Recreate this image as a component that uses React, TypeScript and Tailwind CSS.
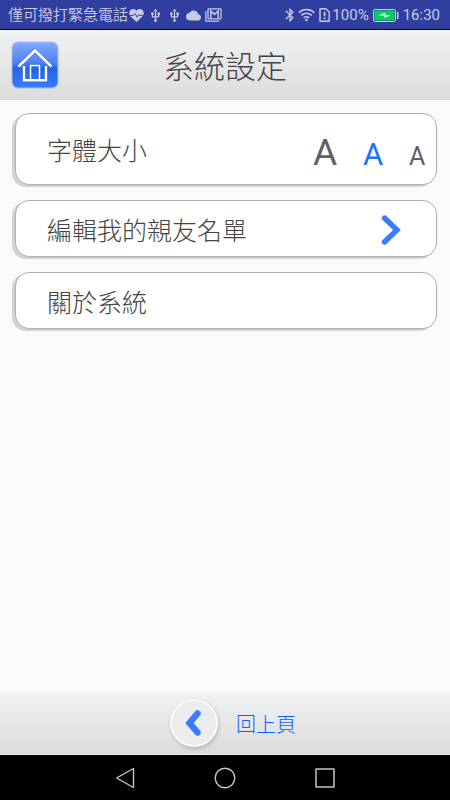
import { useState } from "react";
import { MdBluetooth, MdCloud, MdUsb } from "react-icons/md";

type FontSize = "large" | "medium" | "small";

const fontSizes: { id: FontSize; label: string; className: string }[] = [
  { id: "large", label: "大", className: "w-6 text-[37px]" },
  { id: "medium", label: "中", className: "w-5 text-[31px]" },
  { id: "small", label: "小", className: "w-4 text-[25px]" },
];

const cardClass =
  "flex w-full items-center rounded-[14px] border border-[#aeaeae] bg-white pt-[2px] pr-[11px] pl-[31px] text-left text-[25px] font-light text-[#444] shadow-[-3px_2px_0_0_#d2d2d2]";

const HeartIcon = () => (
  <svg width="15" height="13" viewBox="0 0 15 13" aria-hidden="true">
    <path
      d="M7.5 13 1.6 7.4C-.2 5.5 0 2.5 1.6 1.1 3.4-.5 6.1-.2 7.5 1.8 8.9-.2 11.6-.5 13.4 1.1c1.6 1.4 1.8 4.4 0 6.3z"
      fill="currentColor"
    />
    <path d="M1 6.5h3.5l1.5-2 2.2 3.7 1.6-2.7.9 1H14" fill="none" stroke="#303f9f" strokeWidth=".9" />
  </svg>
);

const MailIcon = () => (
  <svg width="17" height="14" viewBox="0 0 17 14" fill="none" stroke="currentColor" aria-hidden="true">
    <path d="M.8 3v10.2h13.4" strokeWidth="1.2" />
    <rect x="3" y=".8" width="13" height="10" rx=".8" strokeWidth="1.3" />
    <path d="M5.8 10V3l3.7 3.4L13.2 3v7" strokeWidth="1.5" />
  </svg>
);

const WifiIcon = () => (
  <svg width="17" height="14" viewBox="0 0 17 14" fill="none" stroke="currentColor" strokeWidth="1.5" aria-hidden="true">
    <path d="M.8 4.6c4.4-4.1 11-4.1 15.4 0M3.3 7.4c3-2.8 7.4-2.8 10.4 0M5.7 10c1.7-1.5 3.9-1.5 5.6 0" />
    <circle cx="8.5" cy="12" r="1.3" fill="currentColor" stroke="none" />
  </svg>
);

const SimIcon = () => (
  <svg width="11" height="14" viewBox="0 0 11 14" fill="none" stroke="currentColor" aria-hidden="true">
    <path d="M1 .8h5.8L10.2 4v9.2H1z" strokeWidth="1.4" strokeLinejoin="round" />
    <path d="M5.6 3.8v4.4M5.6 9.4v1.8" strokeWidth="1.7" />
  </svg>
);

const BatteryIcon = () => (
  <svg width="26" height="13" viewBox="0 0 26 13" aria-hidden="true">
    <rect x=".5" y=".5" width="22" height="12" rx="1" fill="none" stroke="currentColor" />
    <rect x="1.5" y="1.5" width="20" height="10" fill="#00d455" />
    <path d="m5.5 6.3 6.2-2.5.5 1.8 5.3.8-6 2.7-.6-2z" fill="#d8efe5" />
    <path d="M24 3h1.5v7H24z" fill="currentColor" />
  </svg>
);

const HomeIcon = () => (
  <svg width="48" height="48" viewBox="0 0 48 48" aria-hidden="true">
    <defs>
      <linearGradient id="home-fill" x1="0" y1="0" x2="0" y2="1">
        <stop offset="0" stopColor="#83aaff" />
        <stop offset=".46" stopColor="#4c80f4" />
        <stop offset=".58" stopColor="#2464e8" />
        <stop offset="1" stopColor="#3b7bff" />
      </linearGradient>
    </defs>
    <rect x="1" y="1" width="46" height="46" rx="6" fill="url(#home-fill)" stroke="#a4bff5" />
    <g fill="none" stroke="#244faa" strokeOpacity=".35" strokeWidth="3.6">
      <path d="M7.5 25.5 24 9.5l16.5 16M13 25v14.5h22V25M19.5 39V24.5h9V39" />
    </g>
    <g fill="none" stroke="#fff">
      <path d="M7.5 25.5 24 9.5l16.5 16" strokeWidth="2.6" />
      <path d="M13 25v14.2h22V25" strokeWidth="2.4" />
      <path d="M19.5 39V24.5h9V39" strokeWidth="1.6" />
    </g>
  </svg>
);

const StatusBar = () => (
  <div className="flex h-[30px] items-center justify-between border-b border-[#00007b] bg-[#303f9f] pr-[10px] pl-2 text-[#c8cbe8]">
    <div className="flex items-center">
      <span className="text-[15px] font-[350]">僅可撥打緊急電話</span>
      <div className="flex items-center gap-1 pt-px pl-px">
        <HeartIcon />
        <MdUsb size={15} />
        <MdUsb size={15} />
        <MdCloud size={15} />
        <MailIcon />
      </div>
    </div>
    <div className="flex items-center pt-px font-['Roboto',sans-serif] text-[15px]">
      <MdBluetooth size={16} />
      <WifiIcon />
      <span className="pr-[2px] pl-1">
        <SimIcon />
      </span>
      <span>100%</span>
      <span className="px-1">
        <BatteryIcon />
      </span>
      <span>16:30</span>
    </div>
  </div>
);

const App = () => {
  const [fontSize, setFontSize] = useState<FontSize>("medium");

  return (
    <div className="flex min-h-screen flex-col bg-[#fafafa] font-['Noto_Sans_CJK_TC',sans-serif]">
      <StatusBar />

      <header className="grid h-[70px] grid-cols-[48px_1fr_48px] items-center bg-linear-to-b from-[#f1f2f4] to-[#dcdcdc] px-[11px]">
        <button type="button" aria-label="首頁">
          <HomeIcon />
        </button>
        <h1 className="text-center text-[31px] font-light text-[#444]">系統設定</h1>
      </header>

      <main className="flex flex-1 flex-col gap-[15px] py-[13px] pr-[13px] pl-[15px]">
        <section className={`${cardClass} h-[72px] justify-between`}>
          <h2>字體大小</h2>
          <div className="flex items-baseline gap-[26px] pt-[6px] font-['Roboto',sans-serif] font-normal">
            {fontSizes.map((size) => (
              <button
                key={size.id}
                type="button"
                aria-label={size.label}
                aria-pressed={fontSize === size.id}
                onClick={() => setFontSize(size.id)}
                className={`${size.className} ${fontSize === size.id ? "text-[#1a73ff]" : "text-[#606060]"}`}
              >
                A
              </button>
            ))}
          </div>
        </section>

        <button type="button" className={`${cardClass} h-[57px] justify-between`}>
          <span>編輯我的親友名單</span>
          <svg className="mr-6" width="20" height="30" viewBox="0 0 20 30" aria-hidden="true">
            <path d="M3.5 3 16 15 3.5 27" fill="none" stroke="#3b7cff" strokeWidth="5.4" strokeLinecap="round" />
          </svg>
        </button>

        <button type="button" className={`${cardClass} h-[57px]`}>
          關於系統
        </button>
      </main>

      <footer className="flex h-[63px] items-center justify-center border-b border-[#ededed] bg-linear-to-b from-[#f1f2f4] to-[#dcdcdc] pl-4">
        <button type="button" className="flex items-center gap-[18px] text-[20px] font-light text-[#0a60ff]">
          <span className="flex size-12 items-center justify-center rounded-full border-2 border-[#fafafa] bg-[#ebecee] shadow-[1px_2px_4px_#00000030]">
            <svg width="18" height="28" viewBox="0 0 18 28" aria-hidden="true">
              <path d="M12.5 4.5 4.5 14l8 9.5" fill="none" stroke="#3b7cff" strokeWidth="6.4" strokeLinecap="round" />
            </svg>
          </span>
          <span className="pt-[2px]">回上頁</span>
        </button>
      </footer>

      <nav className="flex h-[45px] items-center justify-center gap-[76px] bg-black text-[#c4c4c4]">
        <button type="button" aria-label="返回">
          <svg width="24" height="24" viewBox="0 0 24 24" fill="none" stroke="currentColor" strokeWidth="1.4" strokeLinejoin="round">
            <path d="M20.5 2.5v19L3.5 12z" />
          </svg>
        </button>
        <button type="button" aria-label="主畫面">
          <svg width="24" height="24" viewBox="0 0 24 24" fill="none" stroke="currentColor" strokeWidth="1.4">
            <circle cx="12" cy="12" r="9.8" />
          </svg>
        </button>
        <button type="button" aria-label="最近使用">
          <svg width="24" height="24" viewBox="0 0 24 24" fill="none" stroke="currentColor" strokeWidth="1.5" strokeLinejoin="round">
            <rect x="3" y="3" width="18" height="18" />
          </svg>
        </button>
      </nav>
    </div>
  );
};

export default App;
